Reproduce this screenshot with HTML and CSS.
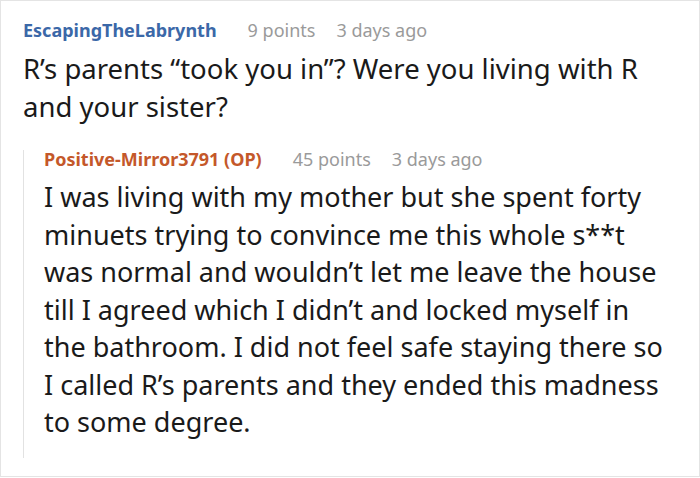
FILE: index.html
```html
<!DOCTYPE html>
<html lang="en">
<head>
  <meta charset="UTF-8" />
  <title>Comment thread</title>
  <link rel="stylesheet" href="styles.css">
</head>
<body>

<div class="thread">
  <div class="comment">
    <div class="comment-meta">
      <span class="author">EscapingTheLabrynth</span>
      <span class="points">9 points</span>
      <span class="time">3 days ago</span>
    </div>
    <p class="comment-text">R’s parents “took you in”? Were you living with R<br>and your sister?</p>

    <div class="reply">
      <div class="comment-meta">
        <span class="author op">Positive-Mirror3791 (OP)</span>
        <span class="points">45 points</span>
        <span class="time">3 days ago</span>
      </div>
      <p class="comment-text">I was living with my mother but she spent forty<br>minuets trying to convince me this whole s**t<br>was normal and wouldn’t let me leave the house<br>till I agreed which I didn’t and locked myself in<br>the bathroom. I did not feel safe staying there so<br>I called R’s parents and they ended this madness<br>to some degree.</p>
    </div>
  </div>
</div>

</body>
</html>
```

FILE: styles.css
```css
body {
  margin: 0;
  padding: 0;
  background-color: #fff;
  font-family: 'Noto Sans', 'Open Sans', sans-serif;
  color: #1a1a1a;
}

.thread {
  width: 700px;
  height: 477px;
  box-sizing: border-box;
  border: 1px solid #e4e4e4;
  overflow: hidden;
}

.comment {
  padding: 17px 0 0 22px;
}

.comment-meta {
  display: flex;
  align-items: baseline;
  gap: 21px;
  font-size: 18px;
  line-height: 24px;
}

.author {
  font-weight: 700;
  color: #3b68a8;
}

.author.op {
  color: #c4582a;
}

.points,
.time {
  color: #9a9a9a;
}

.points {
  margin-left: 10px;
}

.comment-text {
  margin: 8px 0 0 0;
  font-size: 27.5px;
  line-height: 37.5px;
  white-space: nowrap;
}

.reply {
  margin-top: 25px;
  border-left: 1px solid #e2e2e2;
  padding-left: 20px;
  padding-bottom: 17px;
}

.reply .comment-meta {
  line-height: 18px;
}

.reply .comment-text {
  margin-top: 10px;
  font-size: 27px;
}
```
